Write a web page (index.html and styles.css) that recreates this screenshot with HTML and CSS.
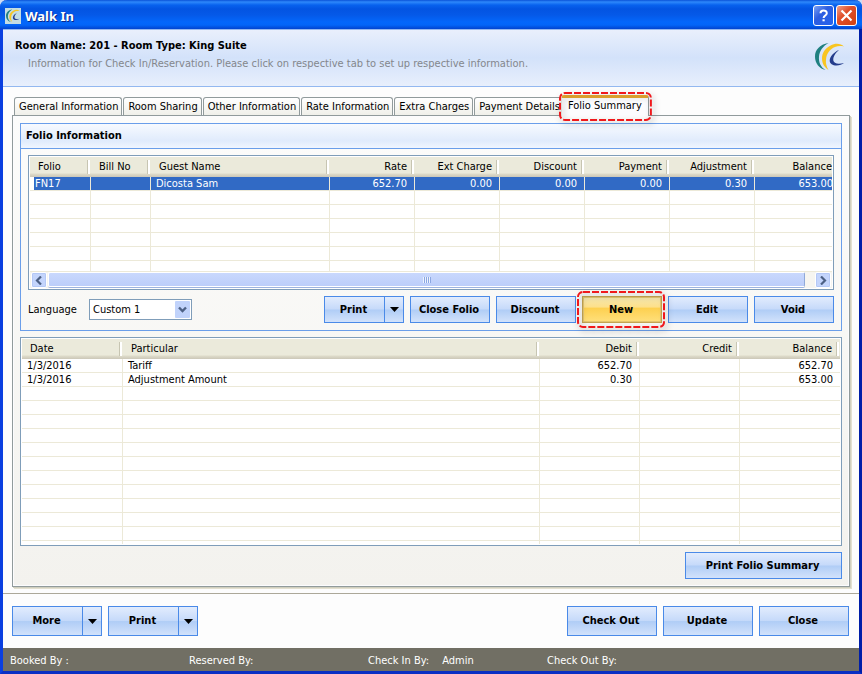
FILE: index.html
```html
<!DOCTYPE html>
<html lang="en">
<head>
<meta charset="utf-8">
<title>Walk In</title>
<link rel="stylesheet" href="styles.css">
</head>
<body>
<svg class="defs" aria-hidden="true">
  <symbol id="logo" viewBox="0 0 30 28">
    <path fill="#1f8080" d="M13.500 0C4.500 1.500 0 7 0 13.500c0 6.500 4 12 10.500 13.500C5.500 24 3.500 19 4 13.500 4.500 8 8 3 13.500 0z"/>
    <path fill="#f8c521" d="M29 3.500C25.500 0 20 0 15.500 2.500 10 5.500 7 10 7 15.500c0 5 2.500 9 6.500 11.500-2-3.500-3-7-2.500-10.500C11.500 10.500 15 6 20 4c3-1.200 6-1.200 9-.5z"/>
    <path fill="#243c8c" d="M24 7c-5 2-9.300 6.500-9.300 10.500 0 3.500 3 5 6.800 5 3.200 0 5.500-1.200 7.500-2.500-3.500.8-7 1-9-.2-3.500-2-1.500-8.300 4-12.800z"/>
  </symbol>
  <symbol id="down" viewBox="0 0 9 5"><path fill="#000" d="M0 0h9L4.500 5z"/></symbol>
</svg>
<main class="window">
  <header class="titlebar">
    <span class="app-icon"><svg><use href="#logo"/></svg></span>
    <h1>Walk In</h1>
    <button class="win-btn" type="button" aria-label="Help"><svg viewBox="0 0 17 17"><path d="M5.500 6.200C5.500 2.500 11.800 2.500 11.800 6.200 11.800 8.500 8.600 8.500 8.600 11" fill="none" stroke="#fff" stroke-width="2"/><path fill="#fff" d="M7.500 12.300h2.200v2H7.500z"/></svg></button>
    <button class="win-btn win-close" type="button" aria-label="Close window"><svg viewBox="0 0 17 17"><path d="M3.500 3.500l10 10M13.500 3.500l-10 10" stroke="#fff" stroke-width="2.200"/></svg></button>
  </header>

  <section class="banner">
    <div>
      <h2>Room Name: 201 - Room Type: King Suite</h2>
      <p>Information for Check In/Reservation. Please click on respective tab to set up respective information.</p>
    </div>
    <svg class="banner-logo"><use href="#logo"/></svg>
  </section>

  <section class="body">
    <div class="tabs" role="tablist">
      <button type="button" role="tab">General Information</button>
      <button type="button" role="tab">Room Sharing</button>
      <button type="button" role="tab">Other Information</button>
      <button type="button" role="tab">Rate Information</button>
      <button type="button" role="tab">Extra Charges</button>
      <button type="button" role="tab">Payment Details</button>
      <button type="button" role="tab" class="active" aria-selected="true">Folio Summary<svg class="ring"><rect x="1" y="1" rx="5"/></svg></button>
    </div>

    <div class="panel" role="tabpanel">
      <section class="group">
        <h3>Folio Information</h3>
        <div class="group-body">
          <div class="list">
            <div class="view view-folio">
              <table class="folio">
                <colgroup><col class="c61"><col class="c60"><col><col class="c85"><col class="c85"><col class="c85"><col class="c85"><col class="c85"><col class="c85"></colgroup>
                <thead><tr><th>Folio</th><th>Bill No</th><th>Guest Name</th><th class="num">Rate</th><th class="num">Ext Charge</th><th class="num">Discount</th><th class="num">Payment</th><th class="num">Adjustment</th><th class="num">Balance</th></tr></thead>
                <tbody>
                  <tr class="selected"><td>FN17</td><td></td><td>Dicosta Sam</td><td class="num">652.70</td><td class="num">0.00</td><td class="num">0.00</td><td class="num">0.00</td><td class="num">0.30</td><td class="num">653.00</td></tr>
                  <tr><td><td><td><td><td><td><td><td><td></tr>
                  <tr><td><td><td><td><td><td><td><td><td></tr>
                  <tr><td><td><td><td><td><td><td><td><td></tr>
                  <tr><td><td><td><td><td><td><td><td><td></tr>
                  <tr><td><td><td><td><td><td><td><td><td></tr>
                  <tr><td><td><td><td><td><td><td><td><td></tr>
                </tbody>
              </table>
            </div>
            <div class="scrollbar">
              <button type="button" aria-label="Scroll left"><svg viewBox="0 0 8 9"><path d="M6 .5l-4 4 4 4" fill="none" stroke="#4d6185" stroke-width="2.200"/></svg></button>
              <div class="track"><div class="thumb"><i></i></div></div>
              <button type="button" aria-label="Scroll right"><svg viewBox="0 0 8 9"><path d="M2 .5l4 4-4 4" fill="none" stroke="#4d6185" stroke-width="2.200"/></svg></button>
            </div>
          </div>
          <div class="tools">
            <label for="lang">Language</label>
            <span class="select">
              <select id="lang"><option>Custom 1</option></select>
              <svg viewBox="0 0 15 17"><rect width="15" height="17" rx="1" fill="#c1d3fb"/><path d="M4 6.500l3.500 3.500L11 6.500" fill="none" stroke="#4d6185" stroke-width="2.400"/></svg>
            </span>
            <div class="buttons">
              <span class="split"><button class="btn" type="button">Print</button><button class="btn drop" type="button" aria-label="Print options"><svg><use href="#down"/></svg></button></span>
              <button class="btn" type="button">Close Folio</button>
              <button class="btn" type="button">Discount</button>
              <button class="btn hot" type="button">New<svg class="ring"><rect x="1" y="1" rx="5"/></svg></button>
              <button class="btn" type="button">Edit</button>
              <button class="btn" type="button">Void</button>
            </div>
          </div>
        </div>
      </section>

      <div class="list list-grow">
        <div class="view">
          <table>
            <colgroup><col class="c101"><col><col class="c100"><col class="c100"><col class="c100"></colgroup>
            <thead><tr><th>Date</th><th>Particular</th><th class="num">Debit</th><th class="num">Credit</th><th class="num">Balance</th></tr></thead>
            <tbody>
              <tr><td>1/3/2016</td><td>Tariff</td><td class="num">652.70</td><td></td><td class="num">652.70</td></tr>
              <tr><td>1/3/2016</td><td>Adjustment Amount</td><td class="num">0.30</td><td></td><td class="num">653.00</td></tr>
              <tr><td><td><td><td><td></tr>
              <tr><td><td><td><td><td></tr>
              <tr><td><td><td><td><td></tr>
              <tr><td><td><td><td><td></tr>
              <tr><td><td><td><td><td></tr>
              <tr><td><td><td><td><td></tr>
              <tr><td><td><td><td><td></tr>
              <tr><td><td><td><td><td></tr>
              <tr><td><td><td><td><td></tr>
              <tr><td><td><td><td><td></tr>
              <tr><td><td><td><td><td></tr>
              <tr><td><td><td><td><td></tr>
            </tbody>
          </table>
        </div>
      </div>

      <div class="panel-foot"><button class="btn wide" type="button">Print Folio Summary</button></div>
    </div>
  </section>

  <footer class="actions">
    <span class="split"><button class="btn" type="button">More</button><button class="btn drop" type="button" aria-label="More options"><svg><use href="#down"/></svg></button></span>
    <span class="split"><button class="btn" type="button">Print</button><button class="btn drop" type="button" aria-label="Print options"><svg><use href="#down"/></svg></button></span>
    <span class="spacer"></span>
    <button class="btn" type="button">Check Out</button>
    <button class="btn" type="button">Update</button>
    <button class="btn" type="button">Close</button>
  </footer>

  <div class="status">
    <span>Booked By :</span>
    <span>Reserved By:</span>
    <span>Check In By: <b>Admin</b></span>
    <span>Check Out By:</span>
  </div>
</main>
</body>
</html>
```
FILE: styles.css
```css
* { box-sizing: border-box; }

body {
  margin: 0;
  background: #cfdcf3;
  color: #000;
  font: 11px/14px "DejaVu Sans Condensed", "DejaVu Sans", Tahoma, sans-serif;
}

h1, h2, h3, p { margin: 0; font-size: 11px; }
button, select { font: inherit; color: inherit; margin: 0; padding: 0; }
svg { display: block; }
.defs { display: none; }

.window {
  display: flex;
  flex-direction: column;
  min-height: 100vh;
  background: #fdfdfd;
  border: solid #0a3fe0;
  border-width: 0 3px 3px;
  border-right-color: #001ea8;
  border-bottom-color: #0a2fc4;
  border-radius: 7px 7px 0 0;
}

/* title bar */
.titlebar {
  display: flex;
  align-items: center;
  gap: 2px;
  height: 29px;
  margin: 0 -3px;
  padding: 2px 5px 0;
  border-radius: 7px 7px 0 0;
  background: linear-gradient(#0a52d8 0, #2e88fb 2px, #0862ee 5px, #0354e2 9px, #0559e8 15px, #0367fb 22px, #0265f8 25px, #0143cf 29px);
}
.titlebar h1 {
  flex: 1;
  padding-left: 2px;
  color: #fff;
  font: bold 13px/16px "Noto Sans", "Trebuchet MS", sans-serif;
  text-shadow: 1px 1px 0 #0a2a8c;
}
.app-icon { width: 16px; height: 16px; padding: 1px; background: #c4dde3; }
.app-icon svg { width: 14px; height: 14px; }
.win-btn {
  width: 21px;
  height: 21px;
  padding: 1px;
  border: 1px solid #fff;
  border-radius: 3px;
  background: linear-gradient(135deg, #7ba2f4, #2e5ee0 40%, #2463ee);
}
.win-close { background: linear-gradient(135deg, #f0a088, #e0502c 40%, #d2400f); }

/* banner */
.banner {
  display: flex;
  justify-content: space-between;
  height: 58px;
  padding: 9px 14px 0 12px;
  border: solid #93b8f0;
  border-width: 1px 0;
  background: linear-gradient(#e9effc, #d3e2fa 50%, #e8effc);
}
.banner p { padding: 4px 13px 0; color: #84878c; }
.banner-logo { width: 30px; height: 28px; margin-top: 4px; }

/* tabs */
.body { flex: 1; display: flex; flex-direction: column; padding: 8px 9px 6px; }
.tabs { display: flex; align-items: flex-end; gap: 1px; padding-left: 2px; }
.tabs button {
  height: 18px;
  padding: 1px 3px 0 4px;
  border: 1px solid #919b9c;
  border-bottom: 0;
  border-radius: 3px 3px 0 0;
  background: linear-gradient(#fff, #f0f0ea);
  white-space: nowrap;
}
.tabs .active {
  position: relative;
  z-index: 1;
  height: 21px;
  margin: 0 0 -1px -4px;
  padding: 0 6px 2px;
  border-top: 3px solid #e8a72e;
  border-left-color: #e8e8e4;
  background: #fcfcfe;
}

/* dashed callout drawn round a control */
.ring {
  position: absolute;
  z-index: 2;
  overflow: visible;
  pointer-events: none;
  filter: drop-shadow(2px 3px 3px #0005);
}
.ring rect {
  width: calc(100% - 2px);
  height: calc(100% - 2px);
  fill: none;
  stroke: #f0181c;
  stroke-width: 2px;
  stroke-dasharray: 7 2;
}
.active .ring { left: -3px; top: -6px; width: calc(100% + 7px); height: 29px; }
.hot .ring { left: -6px; top: -6px; width: calc(100% + 10px); height: 37px; }

.panel {
  flex: 1;
  display: flex;
  flex-direction: column;
  gap: 6px;
  padding: 7px;
  border: 1px solid #919b9c;
  box-shadow: inset 0 0 0 1px #fcfcfe, 1px 1px #d0cfbf, 2px 2px #e3e0d0;
  background: linear-gradient(#fcfcfb, #f3f2ee);
}

.group { border: 1px solid #6a9eea; }
.group h3 {
  padding: 5px;
  border-bottom: 1px solid #6a9eea;
  background: linear-gradient(#f7faff, #e0ebfc 70%, #f0f6ff);
}
.group-body { padding: 6px 7px 7px; }

/* list views */
.list { padding: 1px; border: 1px solid #7f9db9; background: #fff; }
.view { overflow: hidden; }
.view-folio { height: 115px; border-bottom: 1px solid #ece9d8; }
.list-grow { flex: 1 1 0; display: flex; min-height: 209px; overflow: hidden; }
.list-grow .view { flex: 1; }

table { width: 100%; table-layout: fixed; border-collapse: separate; border-spacing: 0; }
.folio { width: calc(100% + 8px); }
th {
  position: relative;
  height: 20px;
  padding: 0 8px;
  background: linear-gradient(#ebeadb 16px, #dedbc9 17px, #cbc7b8 20px);
  font-weight: normal;
  line-height: 18px;
  text-align: left;
  white-space: nowrap;
}
th::after {
  content: "";
  position: absolute;
  right: 1px;
  top: 3px;
  width: 2px;
  height: 14px;
  border-left: 1px solid #c7c5b2;
  background: #fff;
}
td {
  height: 14px;
  padding: 0 7px 0 5px;
  border: solid #ece9d8;
  border-width: 0 1px 1px 0;
  line-height: 13px;
  white-space: nowrap;
}
td:last-child { border-right: 0; }
.num { text-align: right; }
.selected td { background: #316ac5; color: #fff; }
.selected td:first-child { background: linear-gradient(90deg, #fff 4px, #316ac5 4px); }
.c60 { width: 60px; }
.c61 { width: 61px; }
.c85 { width: 85px; }
.c100 { width: 100px; }
.c101 { width: 101px; }

.scrollbar { display: flex; gap: 1px; height: 16px; padding: 0 1px; background: #f6f5f0; }
.scrollbar button {
  display: grid;
  place-items: center;
  width: 16px;
  border: 1px solid #fff;
  border-radius: 2px;
  background: #c4d5fc;
  box-shadow: inset 0 0 0 1px #b4c8f6;
}
.scrollbar button svg { width: 8px; height: 9px; }
.track { flex: 1; padding-right: 9px; }
.thumb {
  display: grid;
  place-items: center;
  height: 15px;
  border: 1px solid #fff;
  border-right: 1px solid #8fa9d8;
  border-radius: 2px;
  background: linear-gradient(#c9d8fd, #bccefa);
  box-shadow: 0 1px #9db4e0;
}
.thumb i { width: 8px; height: 6px; background: repeating-linear-gradient(90deg, #edf3fe 0 1px, #8ba7e2 1px 2px); }

/* toolbar */
.tools { display: flex; align-items: center; padding-top: 6px; }
.tools label { width: 61px; }
.select { position: relative; }
.select select {
  display: block;
  width: 103px;
  height: 21px;
  padding: 0 18px 0 3px;
  appearance: none;
  border: 1px solid #7f9db9;
  border-radius: 0;
  background: #fff;
}
.select svg { position: absolute; right: 2px; top: 2px; width: 15px; height: 17px; pointer-events: none; }
.buttons { display: flex; gap: 6px; margin-left: auto; }

.btn {
  position: relative;
  width: 80px;
  height: 27px;
  padding-right: 2px;
  border: 1px solid #4a8ae8;
  background: linear-gradient(#e2ecfd, #c6dafa 48%, #b0cdf6 52%, #d2e2fb);
  font-weight: bold;
  white-space: nowrap;
}
.split { display: flex; }
.split .btn { flex: 1; width: auto; }
.split .drop { flex: none; display: grid; place-items: center; width: 20px; margin-left: -1px; padding: 0; }
.drop svg { width: 9px; height: 5px; }
.buttons .split { width: 80px; }
.hot {
  border: 1px solid #c5a552;
  background: linear-gradient(#f4e7b0, #fde08a 40%, #fdd050 45%, #ffe07c);
  box-shadow: inset 0 0 0 1px #e2c572;
}
.wide { width: 157px; }
.panel-foot { display: flex; justify-content: flex-end; }

/* footer */
.actions { display: flex; gap: 6px; padding: 12px 10px 12px 9px; border-top: 1px solid #aca899; }
.actions .btn { width: 90px; height: 30px; }
.actions .split { width: 90px; }
.actions .split .btn { width: auto; }
.actions .split .drop { width: 20px; }
.spacer { flex: 1; }

.status {
  display: flex;
  height: 23px;
  padding: 0 7px;
  background: #716f64;
  color: #fff;
  line-height: 26px;
}
.status span { flex: 0 0 179px; white-space: nowrap; }
.status b { padding-left: 10px; font-weight: normal; }
```
